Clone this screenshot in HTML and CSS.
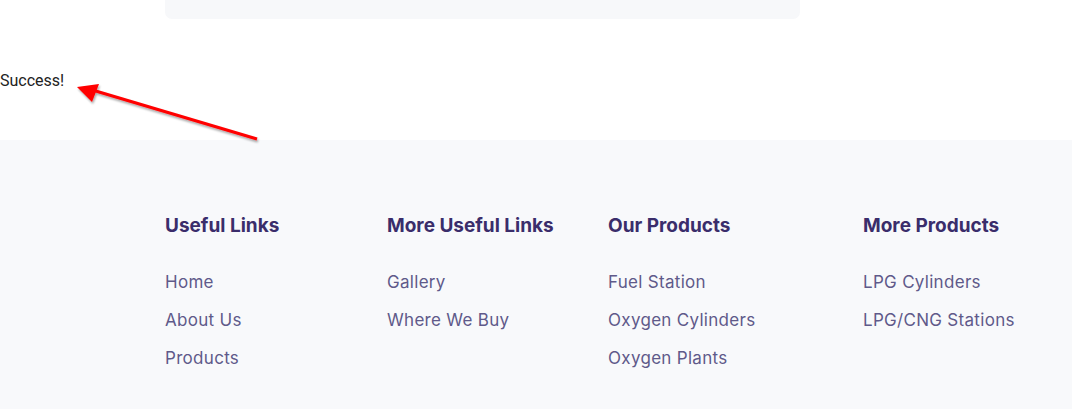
FILE: index.html
```html
<!DOCTYPE html>
<html>
<head>
<meta charset="utf-8">
<link rel="stylesheet" href="styles.css">
</head>
<body>
<div class="card-tail"></div>
<div class="notice">
  <p class="success">Success!</p>
  <svg class="arrow" width="200" height="70" viewBox="0 0 200 70">
    <defs>
      <filter id="sh" x="-20%" y="-50%" width="140%" height="200%">
        <feDropShadow dx="1" dy="2" stdDeviation="1.2" flood-color="#000" flood-opacity="0.35"/>
      </filter>
    </defs>
    <g filter="url(#sh)">
      <line x1="180" y1="58" x2="12" y2="8" stroke="#ff0000" stroke-width="3"/>
      <polygon points="0,6 22,3 15,21" fill="#ff0000"/>
    </g>
  </svg>
</div>
<footer class="footer">
  <div class="cols">
    <div class="col">
      <h3>Useful Links</h3>
      <ul>
        <li>Home</li>
        <li>About Us</li>
        <li>Products</li>
      </ul>
    </div>
    <div class="col">
      <h3>More Useful Links</h3>
      <ul>
        <li>Gallery</li>
        <li>Where We Buy</li>
      </ul>
    </div>
    <div class="col">
      <h3>Our Products</h3>
      <ul>
        <li>Fuel Station</li>
        <li>Oxygen Cylinders</li>
        <li>Oxygen Plants</li>
      </ul>
    </div>
    <div class="col">
      <h3>More Products</h3>
      <ul>
        <li>LPG Cylinders</li>
        <li>LPG/CNG Stations</li>
      </ul>
    </div>
  </div>
</footer>
</body>
</html>
```

FILE: styles.css
```css
html, body {
  margin: 0;
  padding: 0;
  background: #ffffff;
}
body {
  font-family: "Inter", "Liberation Sans", sans-serif;
  overflow: hidden;
}
.card-tail {
  margin-left: 165px;
  width: 635px;
  height: 19px;
  background: #f7f8fa;
  border-radius: 0 0 7px 7px;
}
.notice {
  position: relative;
  height: 121px;
}
.success {
  margin: 0;
  padding-top: 52px;
  font-family: "Roboto", "Liberation Sans", sans-serif;
  font-size: 16px;
  line-height: 19px;
  color: #222222;
}
.arrow {
  position: absolute;
  left: 77px;
  top: 62px;
  overflow: visible;
}
.footer {
  background: #f8f9fb;
  height: 269px;
  padding-top: 73px;
  box-sizing: border-box;
}
.cols {
  margin-left: 165px;
  display: grid;
  grid-template-columns: 222px 221px 255px auto;
}
.col h3 {
  margin: 0;
  font-size: 19px;
  line-height: 26px;
  font-weight: 700;
  color: #3a2d6b;
  letter-spacing: 0;
}
.col ul {
  list-style: none;
  margin: 0;
  padding: 31px 0 0 0;
  display: flex;
  flex-direction: column;
  gap: 14px;
}
.col li {
  font-size: 17px;
  line-height: 24px;
  color: #5f5a8a;
  letter-spacing: 0.3px;
}
```
